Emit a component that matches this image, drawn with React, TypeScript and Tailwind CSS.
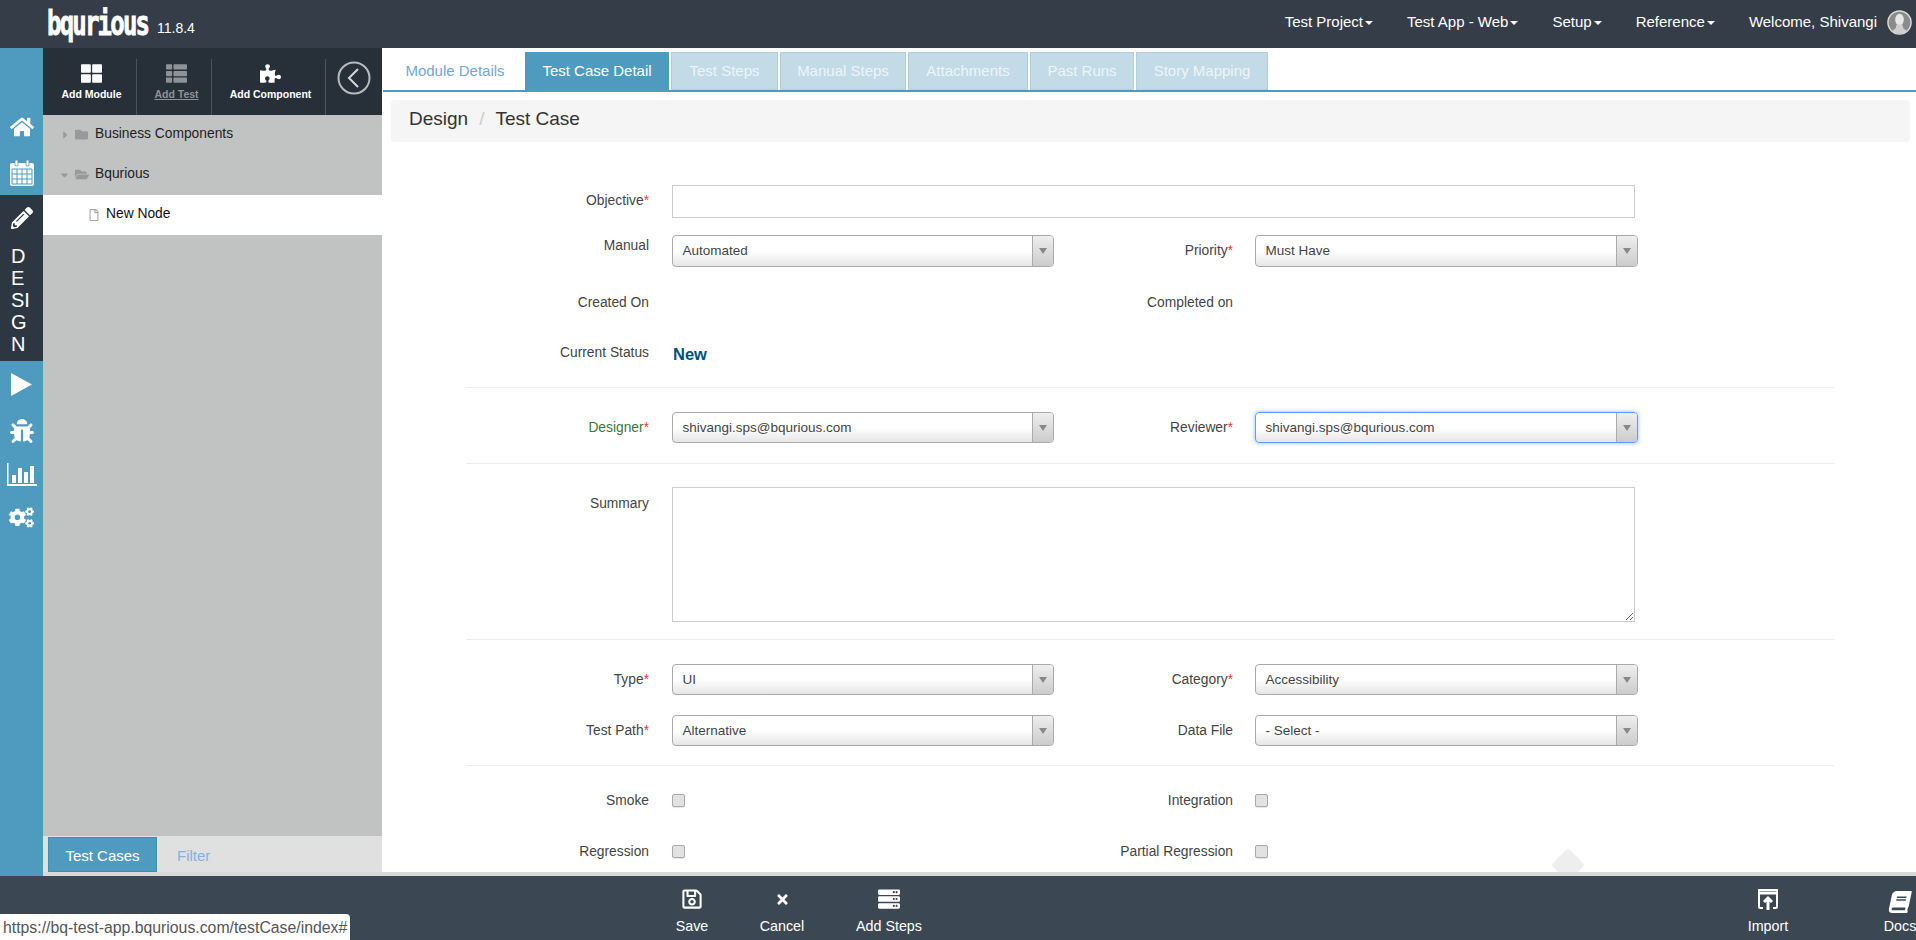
import { ReactNode } from "react";
import {
  FaHome, FaPencilAlt, FaBug, FaCogs,
  FaThLarge, FaThList, FaPuzzlePiece, FaFolder, FaFolderOpen, FaRegFile,
  FaCaretRight, FaCaretDown, FaRegSave, FaTimes, FaServer, FaBook,
} from "react-icons/fa";

const Caret = () => (
  <span className="ml-[2px] inline-block align-middle border-x-[4px] border-t-[4px] border-x-transparent border-t-white" />
);

const Label = ({ text, req, green }: { text: string; req?: boolean; green?: boolean }) => (
  <span className={green ? "text-[#3c763d]" : "text-[#444]"}>
    {text}
    {req && <span className="text-[#e33]">*</span>}
  </span>
);

const Select = ({ value, focus }: { value: string; focus?: boolean }) => (
  <div
    className={`flex h-full w-full rounded-[4px] border bg-gradient-to-b from-white from-50% to-[#e6e6e6] text-[13.5px] text-[#444] ${
      focus ? "border-[#5b9dff] shadow-[0_0_4px_rgba(91,157,255,0.7)]" : "border-[#aaa]"
    }`}
  >
    <div className="flex-1 pl-[9.5px] leading-[29px]">{value}</div>
    <div className="flex w-[21px] items-center justify-center rounded-r-[3px] border-l border-[#aaa] bg-gradient-to-b from-[#eee] to-[#ccc]">
      <span className="border-x-[4px] border-t-[6px] border-x-transparent border-t-[#888]" />
    </div>
  </div>
);

// one form row: label col + control col, twice
const Row = ({
  h, mt, left, leftCtl, right, rightCtl, labelPt = 1, rightPt,
}: {
  h: number; mt?: string; left?: ReactNode; leftCtl?: ReactNode; right?: ReactNode; rightCtl?: ReactNode; labelPt?: number; rightPt?: number;
}) => (
  <div className={`flex text-[13.8px] ${mt ?? ""}`} style={{ height: h }}>
    <div className="w-[183px] shrink-0 text-right leading-[20px]" style={{ paddingTop: labelPt }}>{left}</div>
    <div className="ml-[23px] w-[382px] shrink-0">{leftCtl}</div>
    <div className="w-[179px] shrink-0 text-right leading-[20px]" style={{ paddingTop: rightPt ?? labelPt }}>{right}</div>
    <div className="ml-[22px] w-[383px] shrink-0">{rightCtl}</div>
  </div>
);

const Check = () => (
  <div className="mt-[4px] h-[13px] w-[13px] rounded-[2px] border border-[#aaa] bg-[#e2e2e2] shadow-[0_1px_1px_rgba(0,0,0,0.1)]" />
);

const FootBtn = ({ icon, label, w }: { icon: ReactNode; label: string; w: string }) => (
  <div className={`flex shrink-0 flex-col items-center pt-[11px] text-[14.3px] text-white ${w}`}>
    <div className="flex h-[24px] items-center text-[22px]">{icon}</div>
    <div className="mt-[5px] leading-[20px]">{label}</div>
  </div>
);

const tabs = [
  { name: "Module Details", w: "w-[140px] pl-[4px]", cls: "text-[#6ea8dc] bg-white" },
  { name: "Test Case Detail", w: "w-[144px]", cls: "text-white bg-[#4f9bbf] border border-[#4f9bbf]" },
  { name: "Test Steps", w: "w-[107px]", cls: "text-[#eef5f8] bg-[#c2dbe6] border border-[#aed0df]" },
  { name: "Manual Steps", w: "w-[126px]", cls: "text-[#eef5f8] bg-[#c2dbe6] border border-[#aed0df]" },
  { name: "Attachments", w: "w-[120px]", cls: "text-[#eef5f8] bg-[#c2dbe6] border border-[#aed0df]" },
  { name: "Past Runs", w: "w-[104px]", cls: "text-[#eef5f8] bg-[#c2dbe6] border border-[#aed0df]" },
  { name: "Story Mapping", w: "w-[132px]", cls: "text-[#eef5f8] bg-[#c2dbe6] border border-[#aed0df]" },
];

export default function App() {
  return (
    <div className="relative flex h-screen w-full flex-col overflow-hidden bg-white font-['Liberation_Sans',Arial,sans-serif]">
      {/* top bar */}
      <header className="flex h-12 shrink-0 items-center bg-[#343d48] text-white">
        <div className="ml-[47px] h-[48px] w-[103px]">
          <span className="block scale-y-[1.4] font-['DejaVu_Sans_Mono',monospace] text-[24px] font-bold leading-[48px] tracking-[-1.8px] [-webkit-text-stroke:0.6px_white]">
            bqurious
          </span>
        </div>
        <span className="ml-[7px] mt-[8px] text-[14px]">11.8.4</span>
        <nav className="mb-[3px] ml-auto flex items-center text-[15px]">
          <span className="mr-[34px]">Test Project<Caret /></span>
          <span className="mr-[34px]">Test App - Web<Caret /></span>
          <span className="mr-[34px]">Setup<Caret /></span>
          <span className="mr-[34px]">Reference<Caret /></span>
          <span>Welcome, Shivangi</span>
          <svg viewBox="0 0 26 26" className="ml-[10px] mr-[4px] h-[25px] w-[25px]">
            <circle cx="13" cy="13" r="12" fill="#8b8b8b" stroke="#ddd" strokeWidth="1.5" />
            <ellipse cx="13" cy="10" rx="4.5" ry="6" fill="#e8e8e8" />
            <path d="M10 15h6l1 4 4 3a12 12 0 0 1-16 0l4-3z" fill="#cfcfcf" />
          </svg>
        </nav>
      </header>

      <div className="flex min-h-0 flex-1">
        {/* icon rail */}
        <aside className="flex w-[43px] shrink-0 flex-col bg-[#4f9bbf] text-white">
          <div className="flex h-[102px] items-end justify-center pb-[11px] text-[24px]"><FaHome /></div>
          <div className="flex h-[45px] items-center justify-center">
            <svg viewBox="0 0 24 26" className="h-[26px] w-[24px]">
              <rect x="0" y="3" width="24" height="23" rx="2" fill="white" />
              <rect x="5" y="0" width="3" height="6" rx="1" fill="white" stroke="#4f9bbf" strokeWidth="0.8" />
              <rect x="16" y="0" width="3" height="6" rx="1" fill="white" stroke="#4f9bbf" strokeWidth="0.8" />
              <path d="M2 9h20v15H2z M7 9v15 M12 9v15 M17 9v15 M2 14h20 M2 19h20" fill="none" stroke="#4f9bbf" strokeWidth="1" />
            </svg>
          </div>
          <div className="h-[166px] bg-[#2d3742]">
            <div className="flex h-[46px] items-center justify-center text-[22px]"><FaPencilAlt /></div>
            <div className="mt-[4px] pl-[11px] text-[20px] leading-[22px]">
              <div>D</div><div>E</div><div>SI</div><div>G</div><div>N</div>
            </div>
          </div>
          <div className="flex h-[46px] items-center justify-center">
            <svg viewBox="0 0 20 22" className="h-[23px] w-[21px]" fill="white"><polygon points="0,0 20,11 0,22" /></svg>
          </div>
          <div className="flex h-[47px] items-center justify-center text-[24px]"><FaBug /></div>
          <div className="flex h-[40px] items-center justify-center">
            <svg viewBox="0 0 30 23" className="h-[23px] w-[30px]" fill="white">
              <path d="M0 0h1.5v21H30v2H0z" />
              <rect x="5" y="12" width="4" height="8" />
              <rect x="11" y="5" width="4" height="15" />
              <rect x="17" y="9" width="4" height="11" />
              <rect x="23" y="3" width="4" height="17" />
            </svg>
          </div>
          <div className="flex h-[47px] items-center justify-center text-[25px]"><FaCogs /></div>
        </aside>

        {/* tree panel */}
        <aside className="flex w-[339px] shrink-0 flex-col bg-[#c1c3c2]">
          <div className="flex h-[67px] shrink-0 bg-[#272f39] pt-[11px] text-[10.5px] font-bold text-white">
            <div className="flex w-[94px] flex-col items-center border-r border-[#4b535c] pl-[4px] pt-[4px]">
              <FaThLarge className="h-[21px] w-[21px]" />
              <span className="mt-[3px]">Add Module</span>
            </div>
            <div className="flex w-[75px] flex-col items-center border-r border-[#4b535c] pl-[5px] pt-[4px] text-[#8e9297]">
              <FaThList className="h-[21px] w-[21px]" />
              <span className="mt-[3px] underline">Add Test</span>
            </div>
            <div className="flex w-[114px] flex-col items-center border-r border-[#4b535c] pl-[4px] pt-[4px]">
              <FaPuzzlePiece className="h-[21px] w-[21px]" />
              <span className="mt-[3px]">Add Component</span>
            </div>
            <svg viewBox="0 0 34 34" className="ml-[11px] mt-[2px] h-[34px] w-[34px]" fill="none">
              <circle cx="17" cy="17" r="15.5" stroke="#b9bcbf" strokeWidth="2" />
              <path d="M21 8l-9 9 9 9" stroke="#d5d7d9" strokeWidth="2" />
            </svg>
          </div>
          <div className="flex h-10 items-center pb-[1px] text-[13.8px] text-[#222]">
            <FaCaretRight className="ml-[19px] h-[12px] w-[7px] text-[#999]" />
            <FaFolder className="ml-[6px] h-[13px] w-[13px] text-[#999]" />
            <span className="ml-[7px]">Business Components</span>
          </div>
          <div className="flex h-10 items-center pb-[1px] text-[13.8px] text-[#222]">
            <FaCaretDown className="ml-[17px] h-[12px] w-[9px] text-[#999]" />
            <FaFolderOpen className="ml-[6px] h-[13px] w-[14px] text-[#999]" />
            <span className="ml-[6px]">Bqurious</span>
          </div>
          <div className="flex h-10 items-center bg-white pb-[1px] text-[13.8px] text-[#111]">
            <FaRegFile className="ml-[46px] h-[12px] w-[10px] text-[#aaa]" />
            <span className="ml-[7px]">New Node</span>
          </div>
          <div className="flex-1" />
          <div className="flex h-[40px] shrink-0 border-b-4 border-[#d9d9d9] bg-[#e0e0e0] pl-[5px] pt-[1px] text-[15px]">
            <div className="flex w-[109px] items-center justify-center border border-[#468cae] bg-[#4f9bbf] pt-[3px] text-white">Test Cases</div>
            <div className="ml-[20px] flex items-center pt-[3px] text-[#7db3e0]">Filter</div>
          </div>
        </aside>

        {/* main content */}
        <main className="relative min-w-0 flex-1 overflow-hidden border-b-4 border-[#d9d9d9]">
          <div className="ml-[1px] mt-[4px] flex h-[40px] border-b-2 border-[#4f9bbf] text-[15px]">
            {tabs.map((t) => (
              <div key={t.name} className={`mr-[2px] flex shrink-0 items-center justify-center ${t.w} ${t.cls}`}>
                {t.name}
              </div>
            ))}
          </div>

          <div className="ml-[9px] mr-[6px] mt-[8px] flex h-[42px] items-center rounded-[4px] bg-[#f5f5f5] pb-[3px] pl-[18px] text-[19px] text-[#333]">
            Design<span className="mx-[11px] text-[#ccc]">/</span>Test Case
          </div>

          <div className="ml-[84px] w-[1368px] pt-[43px]">
            <div className="flex h-[33px] text-[13.8px]">
              <div className="w-[183px] shrink-0 pt-[6px] text-right leading-[20px]"><Label text="Objective" req /></div>
              <input className="ml-[23px] w-[963px] border border-[#ccc] outline-none" />
            </div>
            <Row
              h={32} mt="mt-[17px]" left={<Label text="Manual" />} leftCtl={<Select value="Automated" />}
              right={<Label text="Priority" req />} rightCtl={<Select value="Must Have" />} rightPt={6}
            />
            <Row h={20} mt="mt-[25px]" left={<Label text="Created On" />} right={<Label text="Completed on" />} />
            <div className="mt-[30px] flex h-[20px] text-[13.8px]">
              <div className="w-[183px] shrink-0 pt-[1px] text-right leading-[20px]"><Label text="Current Status" /></div>
              <div className="ml-[24px] mt-[2px] text-[16.5px] font-bold leading-[20px] text-[#00507f]">New</div>
            </div>
            <div className="mt-[25px] border-t border-[#eee]" />

            <Row
              h={31} mt="mt-[24px]" labelPt={6} left={<Label text="Designer" req green />} leftCtl={<Select value="shivangi.sps@bqurious.com" />}
              right={<Label text="Reviewer" req />} rightCtl={<Select value="shivangi.sps@bqurious.com" focus />}
            />
            <div className="mt-[20px] border-t border-[#eee]" />

            <div className="mt-[23px] flex h-[135px] text-[13.8px]">
              <div className="w-[183px] shrink-0 pt-[7px] text-right leading-[20px]"><Label text="Summary" /></div>
              <textarea className="ml-[23px] w-[963px] border border-[#ccc] outline-none" />
            </div>
            <div className="mt-[17px] border-t border-[#eee]" />

            <Row
              h={31} mt="mt-[24px]" labelPt={6} left={<Label text="Type" req />} leftCtl={<Select value="UI" />}
              right={<Label text="Category" req />} rightCtl={<Select value="Accessibility" />}
            />
            <Row
              h={31} mt="mt-[20px]" labelPt={6} left={<Label text="Test Path" req />} leftCtl={<Select value="Alternative" />}
              right={<Label text="Data File" />} rightCtl={<Select value="- Select -" />}
            />
            <div className="mt-[19px] border-t border-[#eee]" />

            <Row h={21} mt="mt-[24px]" left={<Label text="Smoke" />} leftCtl={<Check />} right={<Label text="Integration" />} rightCtl={<Check />} />
            <Row h={21} mt="mt-[30px]" left={<Label text="Regression" />} leftCtl={<Check />} right={<Label text="Partial Regression" />} rightCtl={<Check />} />
          </div>

          {/* faded scroll marker */}
          <div className="absolute left-[1174px] top-[805px] h-[24px] w-[24px] rotate-45 rounded-[3px] bg-[#eeeeee]" />
        </main>
      </div>

      {/* bottom bar */}
      <footer className="flex h-[64px] shrink-0 overflow-hidden bg-[#3b4854] pl-[647px]">
        <FootBtn w="w-[90px]" label="Save" icon={<FaRegSave />} />
        <FootBtn w="w-[90px]" label="Cancel" icon={<FaTimes className="h-[15px] w-[13px]" />} />
        <FootBtn w="w-[124px]" label="Add Steps" icon={<FaServer />} />
        <div className="ml-[772px] shrink-0">
          <FootBtn
            w="w-[90px]"
            label="Import"
            icon={
              <svg viewBox="0 0 24 24" className="h-[24px] w-[24px]" fill="none" stroke="white" strokeWidth="2">
                <path d="M7 21H4a1 1 0 0 1-1-1V3h18v17a1 1 0 0 1-1 1h-3" />
                <path d="M3 6h18" strokeWidth="3" />
                <path d="M12 23v-10M8 15l4-4 4 4" strokeWidth="3" />
              </svg>
            }
          />
        </div>
        <FootBtn w="w-[174px]" label="Docs" icon={<FaBook className="mt-[5px] -skew-x-12" />} />
      </footer>

      {/* browser status bubble */}
      <div className="absolute bottom-0 left-0 h-[26px] w-[350px] rounded-tr-[4px] bg-white pl-[3px] pt-[1px] text-[15.8px] leading-[26px] text-[#555]">
        https://bq-test-app.bqurious.com/testCase/index#
      </div>
    </div>
  );
}
